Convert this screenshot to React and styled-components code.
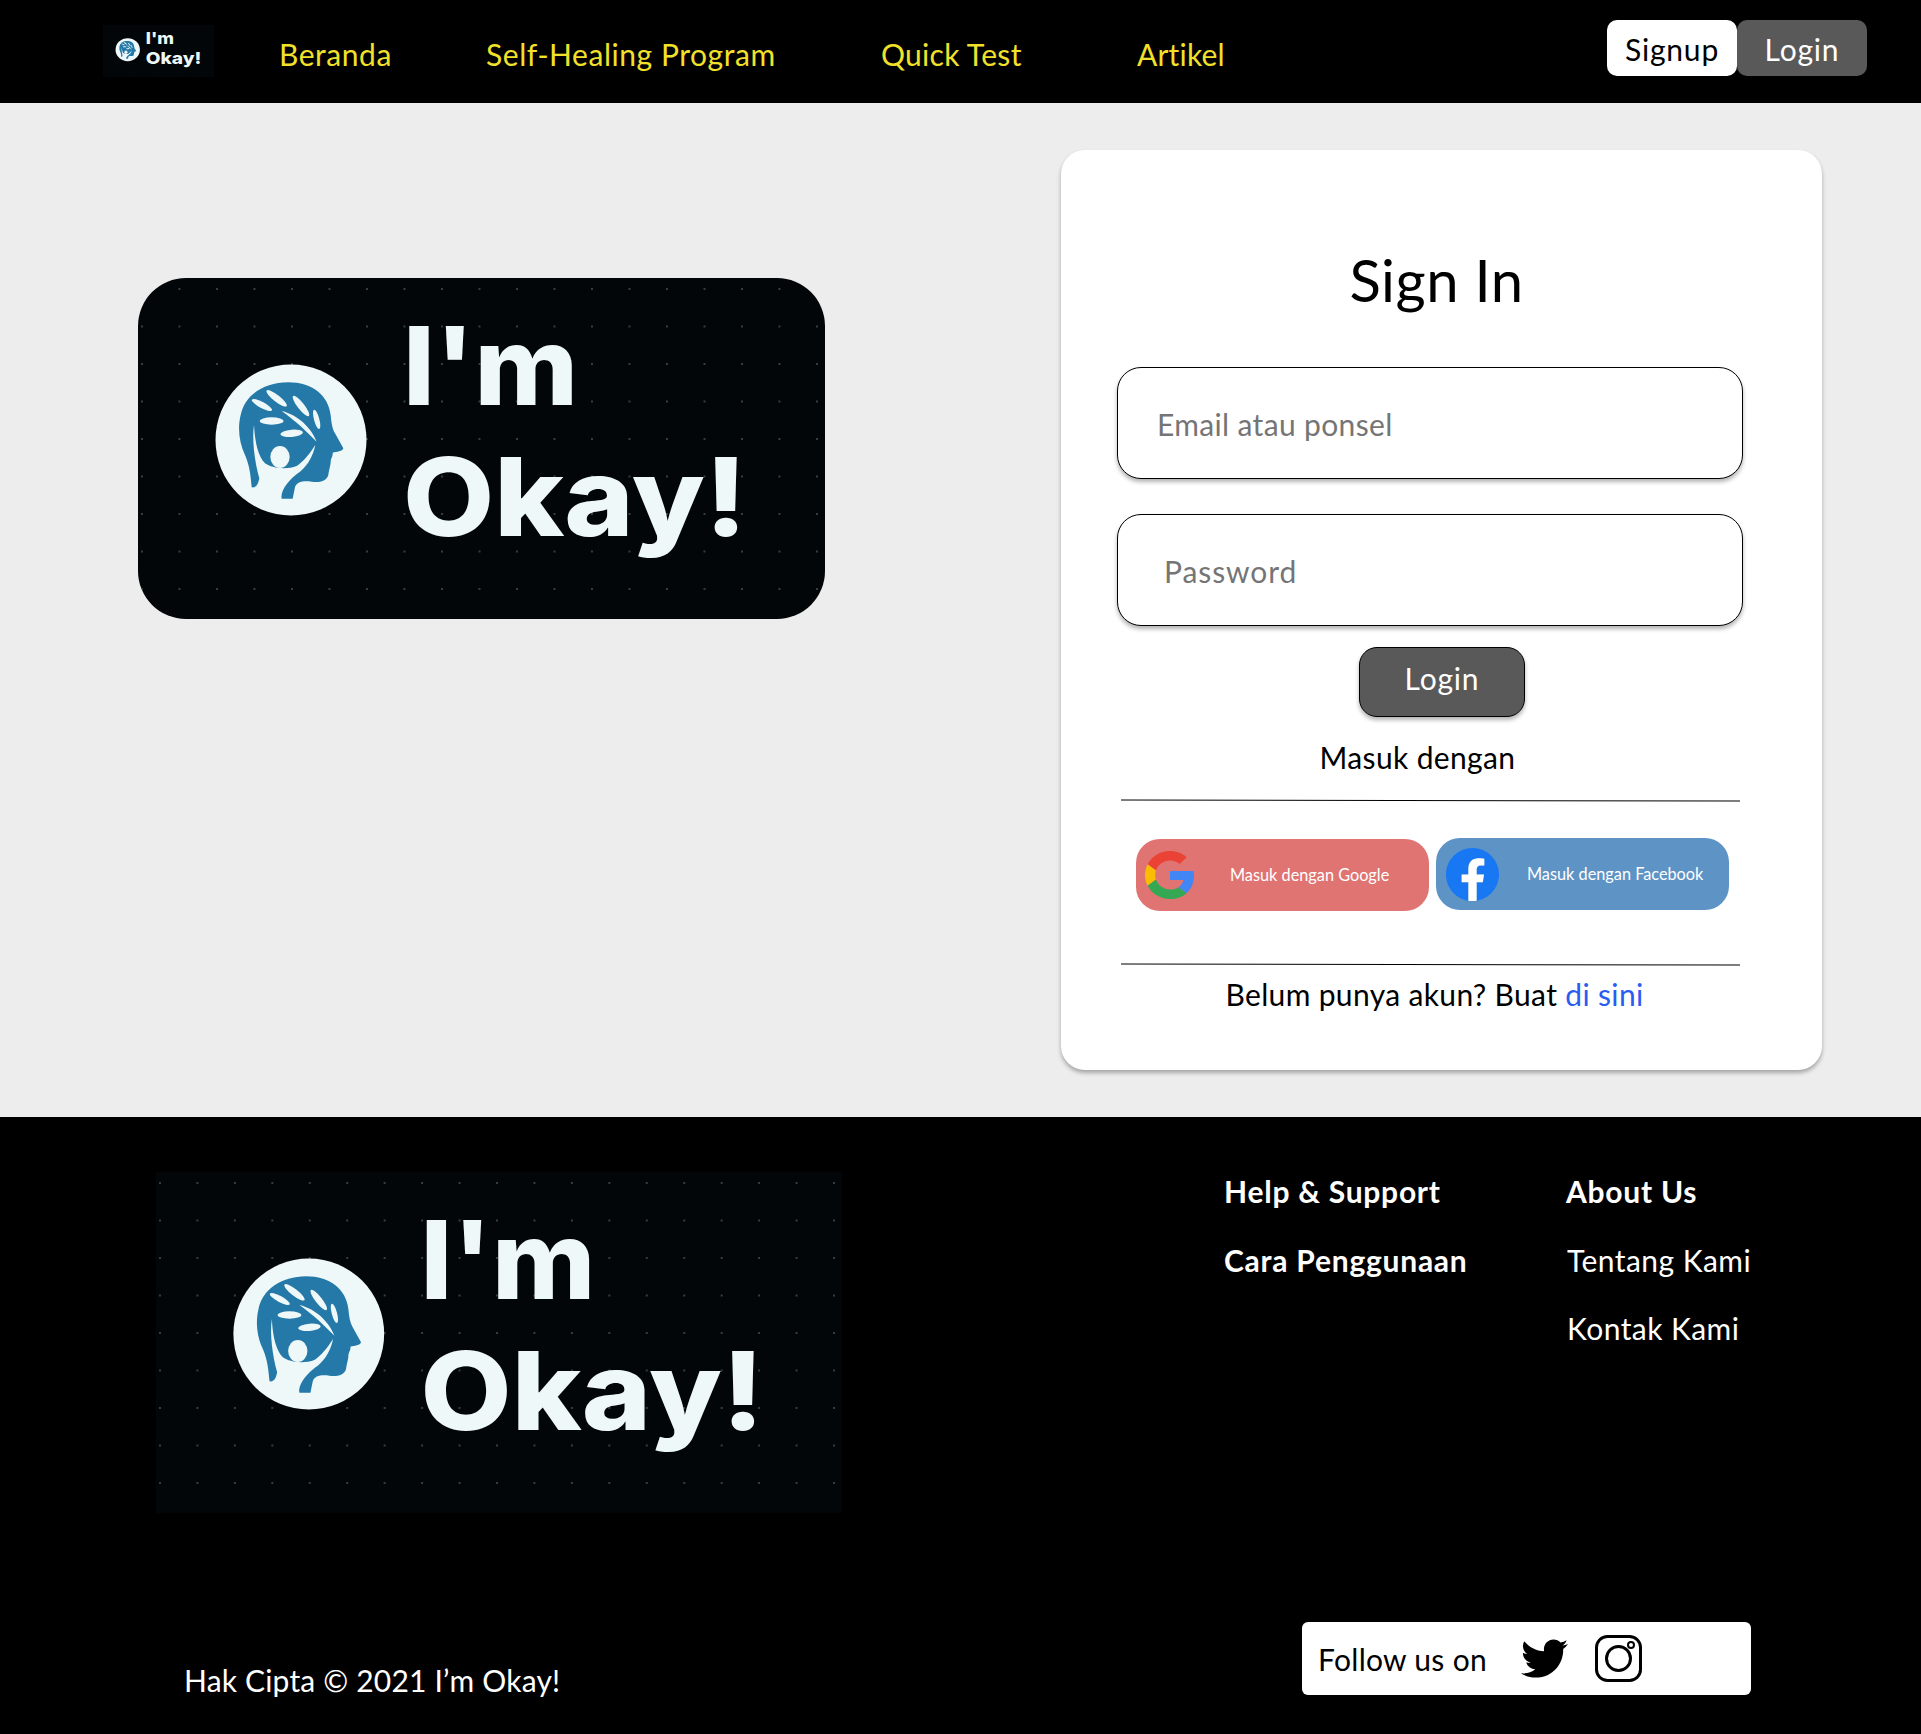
import styled, { createGlobalStyle } from 'styled-components';
import { FaTwitter } from 'react-icons/fa';

const GlobalStyle = createGlobalStyle`
    body {
        margin: 0;
        background: #000;
        font-family: Lato, "Open Sans", sans-serif;
    }
`;

const Page = styled.div`
    width: 1921px;
    height: 1734px;
    display: flex;
    flex-direction: column;
    overflow: hidden;
`;

/* header */
const Nav = styled.nav`
    height: 103px;
    flex: none;
    background: #000;
    display: flex;
    align-items: center;
    padding-left: 103px;
`;

const NavLogo = styled.div`
    width: 176px;
    flex: none;
    margin-top: -1px;
`;

const NavLogoFrame = styled.div`
    width: 111px;
    height: 52px;
`;

const NavLink = styled.a`
    width: ${(p) => p.$w}px;
    flex: none;
    color: #f2e12a;
    font-size: 30px;
    letter-spacing: ${(p) => p.$track}px;
    line-height: 40px;
    margin-top: 4px;
`;

const AuthGroup = styled.div`
    margin-left: auto;
    margin-right: 54px;
    margin-top: -7px;
    display: flex;
`;

const AuthButton = styled.button`
    width: 130px;
    height: 56px;
    border: 0;
    border-radius: 10px;
    padding: 2px 0 0;
    font-family: inherit;
    font-size: 30px;
    letter-spacing: 0.8px;
    background: ${(p) => (p.$dark ? '#595959' : '#fff')};
    color: ${(p) => (p.$dark ? '#fff' : '#000')};
`;

/* main */
const Main = styled.main`
    height: 1014px;
    flex: none;
    background: #ededed;
    display: flex;
    align-items: flex-start;
    padding: 47px 0 0 138px;
    box-sizing: border-box;
`;

const HeroLogo = styled.div`
    margin-top: 128px;
    width: 687px;
    height: 341px;
    flex: none;
    border-radius: 48px;
    overflow: hidden;
`;

const Card = styled.section`
    margin-left: 236px;
    width: 761px;
    height: 920px;
    flex: none;
    box-sizing: border-box;
    background: #fff;
    border-radius: 24px;
    box-shadow: 0 3px 4px rgba(0, 0, 0, 0.3);
    padding: 96px 0 0 56px;
`;

const Title = styled.h1`
    margin: 0 0 53px;
    width: 625px;
    box-sizing: border-box;
    padding-left: 14px;
    text-align: center;
    font-size: 58px;
    font-weight: 400;
    letter-spacing: 0.5px;
    line-height: 68px;
    color: #000;
`;

const Field = styled.input`
    display: block;
    width: 626px;
    height: 112px;
    box-sizing: border-box;
    margin-bottom: ${(p) => p.$gap}px;
    padding: 2px 0 0 ${(p) => p.$indent}px;
    border: 1px solid #000;
    border-radius: 24px;
    background: #fff;
    box-shadow: 0 3px 4px rgba(0, 0, 0, 0.3);
    font-family: inherit;
    font-size: 30px;
    letter-spacing: ${(p) => p.$track}px;
    outline: none;

    &::placeholder {
        color: #757575;
        opacity: 1;
    }
`;

const SubmitButton = styled.button`
    display: block;
    margin-left: 242px;
    width: 166px;
    height: 70px;
    padding: 0 0 8px;
    border: 1px solid #000;
    border-radius: 18px;
    background: #595959;
    box-shadow: 0 3px 4px rgba(0, 0, 0, 0.3);
    color: #fff;
    font-family: inherit;
    font-size: 30px;
    letter-spacing: 0.8px;
`;

const CenterText = styled.div`
    width: 625px;
    box-sizing: border-box;
    margin-top: ${(p) => p.$top}px;
    padding-left: ${(p) => p.$left || 0}px;
    padding-right: ${(p) => p.$right || 0}px;
    text-align: center;
    font-size: 30px;
    letter-spacing: 0.35px;
    line-height: 40px;
    color: #000;
`;

const LinkText = styled.a`
    color: #2a5cf2;
`;

const Divider = styled.hr`
    margin: ${(p) => p.$top}px 0 0 4px;
    width: 619px;
    height: 1px;
    border: 0;
    background: #000;
    transform: rotate(0.1deg);
`;

const SocialRow = styled.div`
    margin: 37px 0 0 19px;
    height: 73px;
    display: flex;
    align-items: flex-start;
    gap: 7px;
`;

const SocialButton = styled.a`
    width: 293px;
    height: 72px;
    margin-top: ${(p) => p.$top || 0}px;
    padding-left: ${(p) => p.$pad}px;
    box-sizing: border-box;
    display: flex;
    align-items: center;
    border-radius: 24px;
    background: ${(p) => p.$bg};
`;

const SocialLabel = styled.span`
    margin-left: ${(p) => p.$gap}px;
    margin-bottom: 2px;
    color: #fff;
    font-size: 16.3px;
`;

/* footer */
const Footer = styled.footer`
    flex: 1;
    background: #000;
    color: #fff;
    display: flex;
    flex-direction: column;
    justify-content: space-between;
    padding: 40px 170px 34px 0;
`;

const FooterTop = styled.div`
    padding-left: 156px;
    display: grid;
    grid-template-columns: 1068px 342px auto;
`;

const FooterLogo = styled.div`
    margin-top: 15px;
    width: 686px;
    height: 341px;
`;

const FooterColumn = styled.div`
    display: flex;
    flex-direction: column;
    white-space: nowrap;
`;

const FooterItem = styled.a`
    font-size: 30px;
    line-height: 68.5px;
    font-weight: ${(p) => (p.$bold ? 700 : 400)};
    letter-spacing: ${(p) => (p.$bold ? 0.75 : 0.45)}px;
    margin-left: ${(p) => (p.$bold ? 0 : 1)}px;
    color: #fff;
`;

const FooterBottom = styled.div`
    display: flex;
    align-items: flex-end;
    justify-content: space-between;
    padding-left: 184px;
`;

const Copyright = styled.div`
    font-size: 30px;
    letter-spacing: 0.18px;
    line-height: 40px;
`;

const FollowBox = styled.div`
    width: 449px;
    height: 73px;
    margin-bottom: 5px;
    box-sizing: border-box;
    padding-left: 16px;
    display: flex;
    align-items: center;
    gap: 34px;
    background: #fff;
    border-radius: 6px;
    color: #000;
    font-size: 30px;
    letter-spacing: 0.3px;
`;

const FollowIcons = styled.div`
    display: flex;
    align-items: center;
    gap: 27px;
    color: #000;
`;

const LogoArt = ({ patternId }) => (
    <svg
        width="100%"
        height="100%"
        viewBox="0 0 687 341"
        preserveAspectRatio="none"
        style={{ display: 'block' }}
    >
        <defs>
            <pattern id={patternId} x="3" y="10" width="37.5" height="37.5" patternUnits="userSpaceOnUse">
                <circle cx="1" cy="1" r="1" fill="#45524f" />
            </pattern>
        </defs>
        <rect width="687" height="341" fill="#020608" />
        <rect width="687" height="341" fill={`url(#${patternId})`} />
        <circle cx="153" cy="162" r="75.5" fill="#eef8f8" />
        <g transform="translate(62 72) scale(0.3333)">
            <path
                fill="#2479a8"
                d="M155 412 C152 380 150 350 135 315 C118 280 112 235 122 195 C135 135 190 98 265 97 C335 97 385 135 392 195 C394 215 396 235 405 250 L430 295 C428 305 410 305 398 308 C400 318 392 325 392 335 C392 345 388 355 385 375 C380 395 355 398 335 395 C310 392 290 395 285 412 L278 446 L245 446 C240 420 270 385 300 365 C325 345 340 315 346 285 C330 310 310 335 290 348 C260 360 215 355 195 340 C175 320 165 280 162 225 C155 270 165 340 178 385 C175 400 170 415 155 412 Z"
            />
            <g fill="#eef8f8">
                <ellipse cx="186" cy="165" rx="34" ry="9" transform="rotate(28 186 165)" />
                <ellipse cx="230" cy="145" rx="38" ry="10" transform="rotate(38 230 145)" />
                <ellipse cx="303" cy="168" rx="38" ry="10" transform="rotate(52 303 168)" />
                <ellipse cx="350" cy="208" rx="30" ry="8" transform="rotate(75 350 208)" />
                <ellipse cx="215" cy="213" rx="36" ry="11" />
                <ellipse cx="275" cy="250" rx="34" ry="11" transform="rotate(-5 275 250)" />
                <ellipse cx="240" cy="321" rx="29" ry="33" />
                <path d="M245 183 C295 195 335 235 350 275 C320 245 290 215 245 183 Z" />
            </g>
        </g>
        <g fill="#eef8f8" fontFamily="Inter, sans-serif" fontWeight="800" fontSize="108">
            <text x="265" y="127" textLength="175" lengthAdjust="spacingAndGlyphs">I'm</text>
            <text x="265" y="258" textLength="344" lengthAdjust="spacingAndGlyphs">Okay!</text>
        </g>
    </svg>
);

const GoogleIcon = () => (
    <svg width="50" height="48" viewBox="0 0 48 48" preserveAspectRatio="none">
        <path fill="#EA4335" d="M24 9.5c3.54 0 6.71 1.22 9.21 3.6l6.85-6.85C35.9 2.38 30.47 0 24 0 14.62 0 6.51 5.38 2.56 13.22l7.98 6.19C12.43 13.72 17.74 9.5 24 9.5z" />
        <path fill="#4285F4" d="M46.98 24.55c0-1.57-.15-3.09-.38-4.55H24v9.02h12.94c-.58 2.96-2.26 5.48-4.78 7.18l7.73 6c4.51-4.18 7.09-10.36 7.09-17.65z" />
        <path fill="#FBBC05" d="M10.53 28.59c-.48-1.45-.76-2.99-.76-4.59s.27-3.14.76-4.59l-7.98-6.19C.92 16.46 0 20.12 0 24c0 3.88.92 7.54 2.56 10.78l7.97-6.19z" />
        <path fill="#34A853" d="M24 48c6.48 0 11.93-2.13 15.89-5.81l-7.73-6c-2.15 1.45-4.92 2.3-8.16 2.3-6.26 0-11.57-4.22-13.47-9.91l-7.98 6.19C6.51 42.62 14.62 48 24 48z" />
    </svg>
);

const FacebookIcon = () => (
    <svg width="53" height="53" viewBox="0 0 36 36">
        <path fill="#1877f2" d="M36 18C36 8.06 27.94 0 18 0S0 8.06 0 18c0 8.98 6.58 16.43 15.19 17.78V23.2h-4.57V18h4.57v-3.96c0-4.51 2.69-7 6.8-7 1.97 0 4.03.35 4.03.35v4.43h-2.27c-2.24 0-2.93 1.39-2.93 2.81V18h4.99l-.8 5.2h-4.19v12.58C29.42 34.43 36 26.98 36 18z" />
        <path fill="#fff" d="M25.01 23.2l.8-5.2h-4.99v-3.37c0-1.42.7-2.81 2.93-2.81h2.27V7.39s-2.06-.35-4.03-.35c-4.11 0-6.8 2.49-6.8 7V18h-4.57v5.2h4.57v12.58c.92.14 1.86.22 2.81.22s1.89-.07 2.81-.22V23.2h4.19z" />
    </svg>
);

const InstagramIcon = () => (
    <svg width="47" height="47" viewBox="0 0 47 47" fill="none" stroke="#000" strokeWidth="3">
        <rect x="1.5" y="1.5" width="44" height="44" rx="11" />
        <circle cx="23.5" cy="23.5" r="12" />
        <circle cx="36" cy="10" r="3" strokeWidth="2" />
    </svg>
);

export default function App() {
    return (
        <Page>
            <GlobalStyle />
            <Nav>
                <NavLogo>
                    <NavLogoFrame>
                        <LogoArt patternId="dots-nav" />
                    </NavLogoFrame>
                </NavLogo>
                <NavLink $w={207} $track={0.55}>Beranda</NavLink>
                <NavLink $w={395} $track={0.55}>Self-Healing Program</NavLink>
                <NavLink $w={256} $track={0.3}>Quick Test</NavLink>
                <NavLink $w={120} $track={0.2}>Artikel</NavLink>
                <AuthGroup>
                    <AuthButton>Signup</AuthButton>
                    <AuthButton $dark>Login</AuthButton>
                </AuthGroup>
            </Nav>
            <Main>
                <HeroLogo>
                    <LogoArt patternId="dots-hero" />
                </HeroLogo>
                <Card>
                    <Title>Sign In</Title>
                    <Field placeholder="Email atau ponsel" $indent={39} $gap={35} $track={0.35} />
                    <Field placeholder="Password" $indent={46} $gap={21} $track={0.9} />
                    <SubmitButton>Login</SubmitButton>
                    <CenterText $top={20} $right={24}>Masuk dengan</CenterText>
                    <Divider $top={23} />
                    <SocialRow>
                        <SocialButton $bg="#e07472" $pad={9} $top={1}>
                            <GoogleIcon />
                            <SocialLabel $gap={35}>Masuk dengan Google</SocialLabel>
                        </SocialButton>
                        <SocialButton $bg="#5e93c5" $pad={10}>
                            <FacebookIcon />
                            <SocialLabel $gap={28}>Masuk dengan Facebook</SocialLabel>
                        </SocialButton>
                    </SocialRow>
                    <Divider $top={53} />
                    <CenterText $top={9} $left={10}>
                        Belum punya akun? Buat <LinkText>di sini</LinkText>
                    </CenterText>
                </Card>
            </Main>
            <Footer>
                <FooterTop>
                    <FooterLogo>
                        <LogoArt patternId="dots-footer" />
                    </FooterLogo>
                    <FooterColumn>
                        <FooterItem $bold>Help &amp; Support</FooterItem>
                        <FooterItem $bold>Cara Penggunaan</FooterItem>
                    </FooterColumn>
                    <FooterColumn>
                        <FooterItem $bold>About Us</FooterItem>
                        <FooterItem>Tentang Kami</FooterItem>
                        <FooterItem>Kontak Kami</FooterItem>
                    </FooterColumn>
                </FooterTop>
                <FooterBottom>
                    <Copyright>Hak Cipta © 2021 I’m Okay!</Copyright>
                    <FollowBox>
                        Follow us on
                        <FollowIcons>
                            <FaTwitter size={47} />
                            <InstagramIcon />
                        </FollowIcons>
                    </FollowBox>
                </FooterBottom>
            </Footer>
        </Page>
    );
}
